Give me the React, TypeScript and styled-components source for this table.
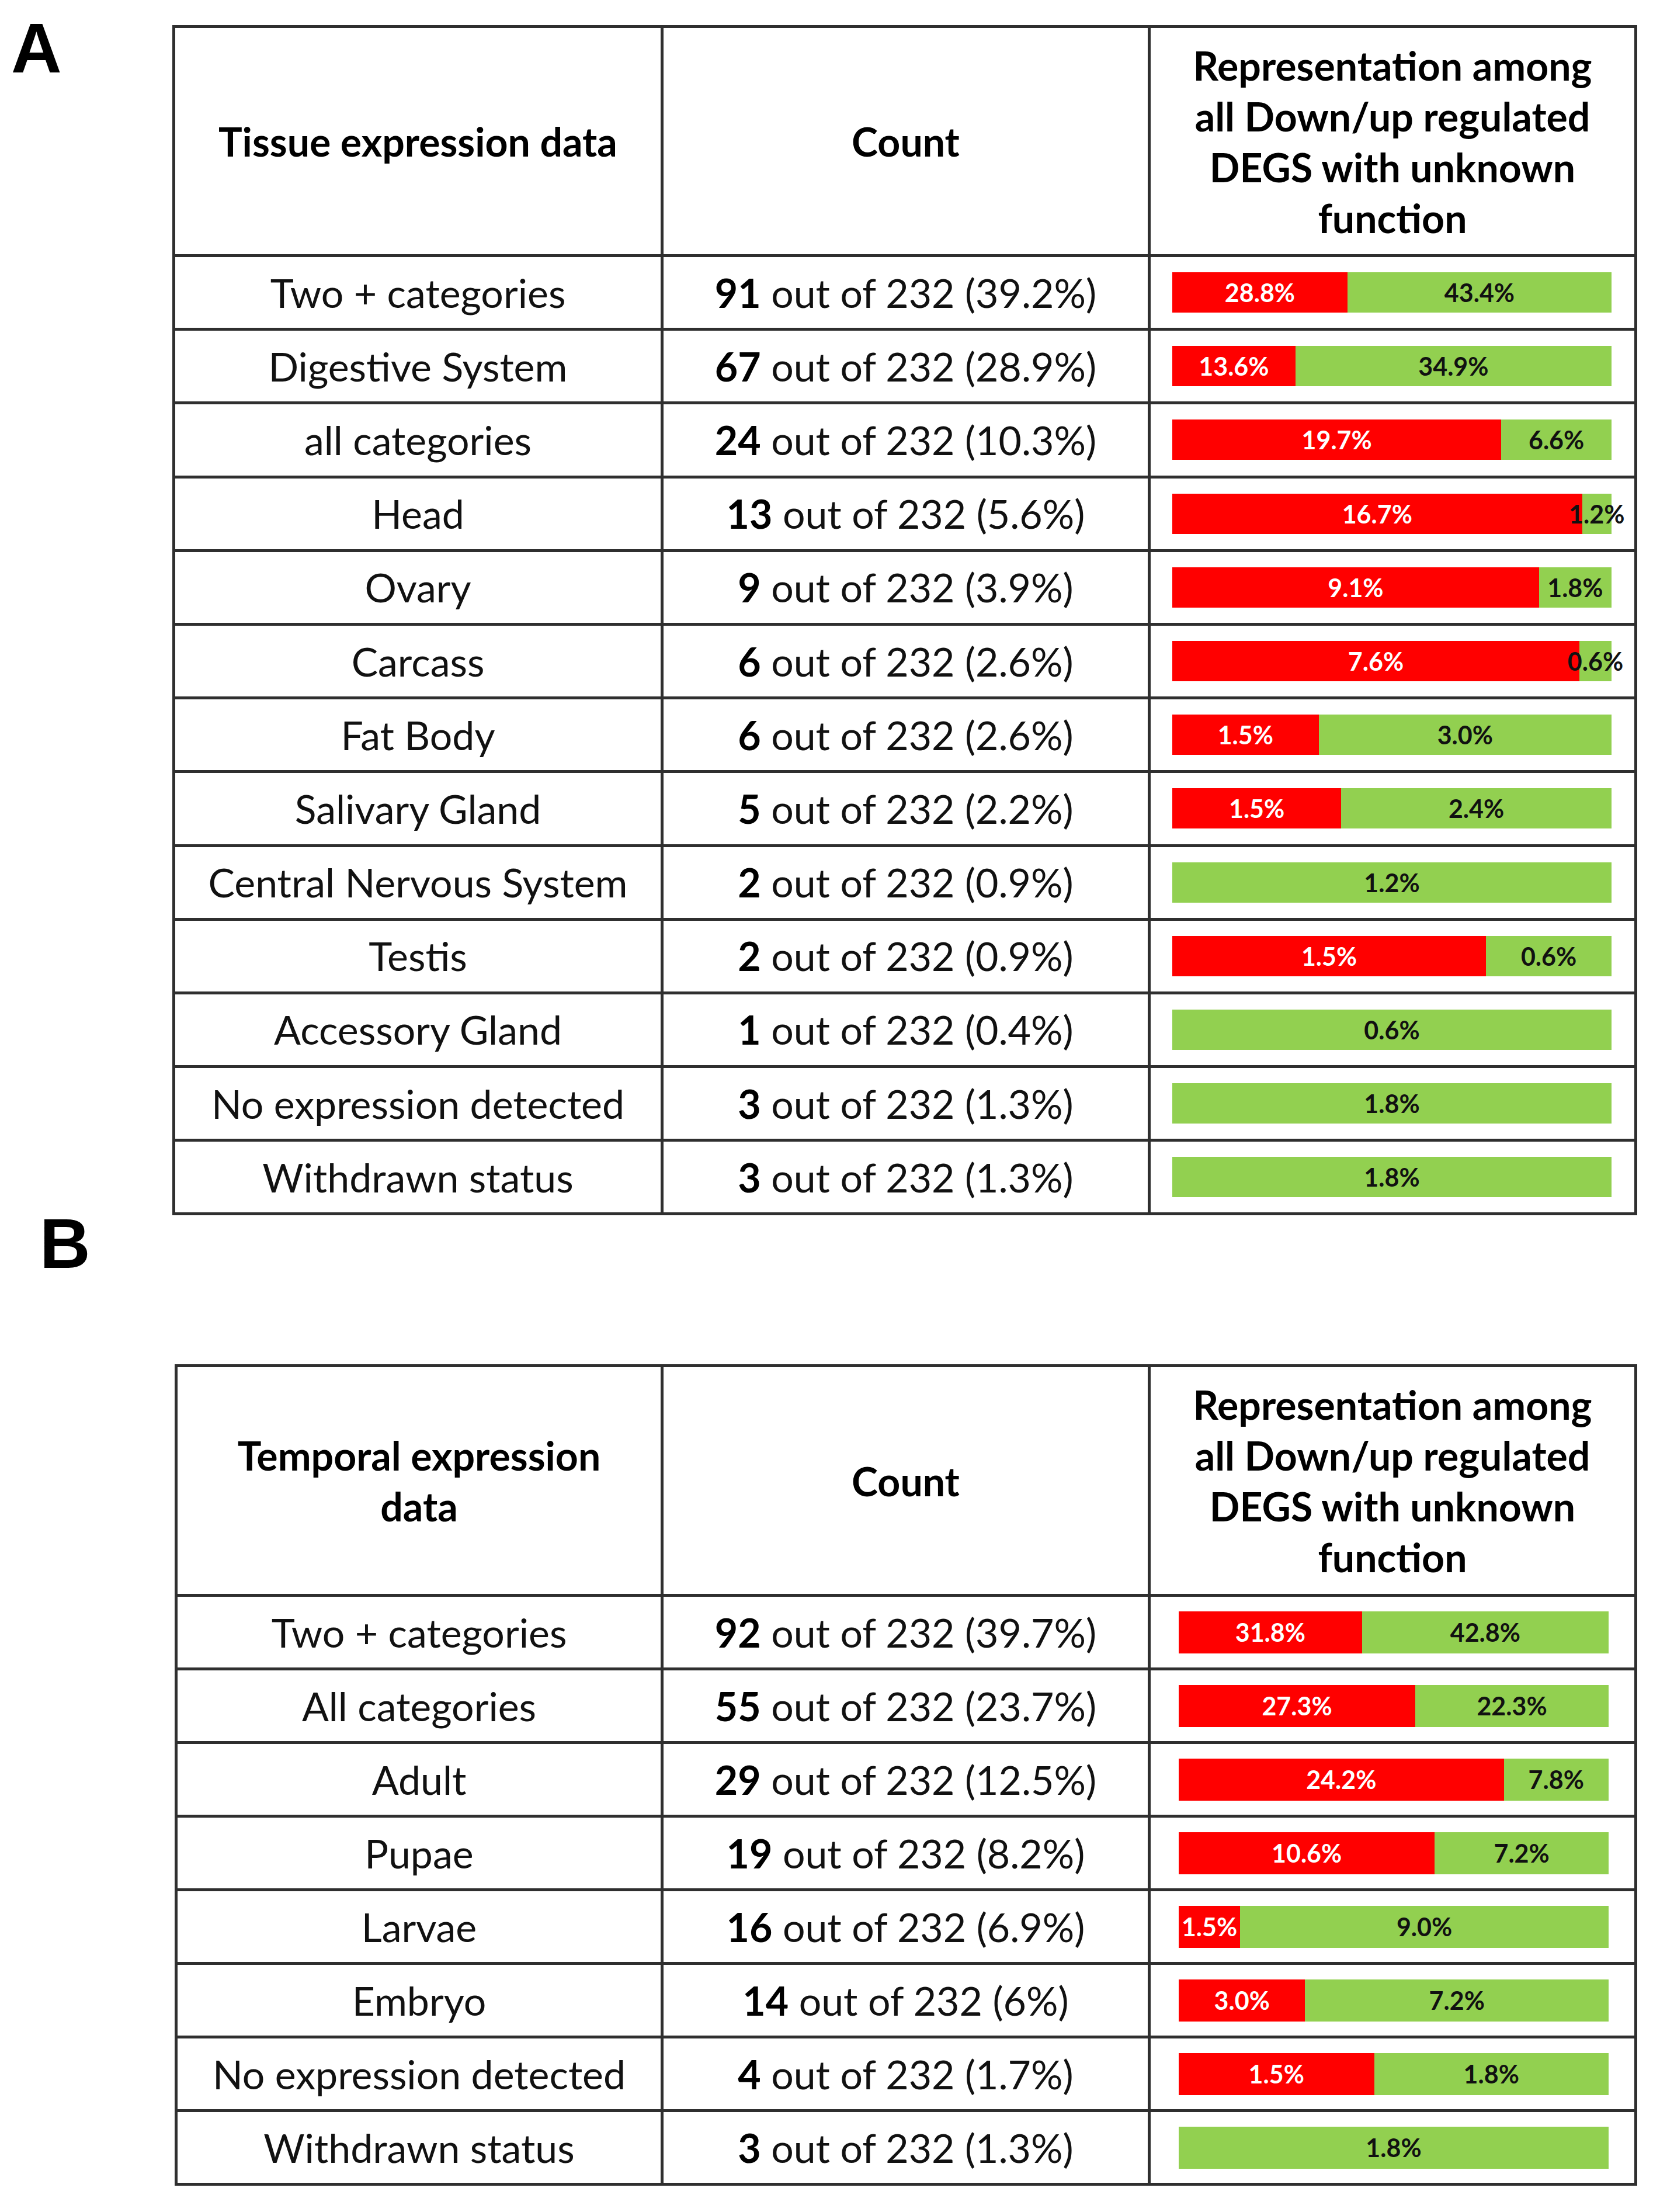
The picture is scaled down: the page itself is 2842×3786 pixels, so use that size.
import React from "react";
import styled, { createGlobalStyle } from "styled-components";

const GlobalStyle = createGlobalStyle`
  html, body {
    margin: 0;
    padding: 0;
    background: #ffffff;
  }
  body {
    width: 2842px;
    min-height: 3786px;
    font-family: Lato, "Open Sans", "Noto Sans", sans-serif;
    color: #000000;
  }
`;

type Split = { down?: number; up: number };
type DataRow = { label: string; n: number; pct: string; split: Split };

const tissueRows: DataRow[] = [
  { label: "Two + categories", n: 91, pct: "39.2%", split: { down: 28.8, up: 43.4 } },
  { label: "Digestive System", n: 67, pct: "28.9%", split: { down: 13.6, up: 34.9 } },
  { label: "all categories", n: 24, pct: "10.3%", split: { down: 19.7, up: 6.6 } },
  { label: "Head", n: 13, pct: "5.6%", split: { down: 16.7, up: 1.2 } },
  { label: "Ovary", n: 9, pct: "3.9%", split: { down: 9.1, up: 1.8 } },
  { label: "Carcass", n: 6, pct: "2.6%", split: { down: 7.6, up: 0.6 } },
  { label: "Fat Body", n: 6, pct: "2.6%", split: { down: 1.5, up: 3.0 } },
  { label: "Salivary Gland", n: 5, pct: "2.2%", split: { down: 1.5, up: 2.4 } },
  { label: "Central Nervous System", n: 2, pct: "0.9%", split: { up: 1.2 } },
  { label: "Testis", n: 2, pct: "0.9%", split: { down: 1.5, up: 0.6 } },
  { label: "Accessory Gland", n: 1, pct: "0.4%", split: { up: 0.6 } },
  { label: "No expression detected", n: 3, pct: "1.3%", split: { up: 1.8 } },
  { label: "Withdrawn status", n: 3, pct: "1.3%", split: { up: 1.8 } },
];

const temporalRows: DataRow[] = [
  { label: "Two + categories", n: 92, pct: "39.7%", split: { down: 31.8, up: 42.8 } },
  { label: "All categories", n: 55, pct: "23.7%", split: { down: 27.3, up: 22.3 } },
  { label: "Adult", n: 29, pct: "12.5%", split: { down: 24.2, up: 7.8 } },
  { label: "Pupae", n: 19, pct: "8.2%", split: { down: 10.6, up: 7.2 } },
  { label: "Larvae", n: 16, pct: "6.9%", split: { down: 1.5, up: 9.0 } },
  { label: "Embryo", n: 14, pct: "6%", split: { down: 3.0, up: 7.2 } },
  { label: "No expression detected", n: 4, pct: "1.7%", split: { down: 1.5, up: 1.8 } },
  { label: "Withdrawn status", n: 3, pct: "1.3%", split: { up: 1.8 } },
];

const Figure = styled.div`
  display: flex;
  flex-direction: column;
  width: 2842px;
  min-height: 3786px;
`;

const PanelRow = styled.div`
  display: flex;
  align-items: flex-start;
`;

const PanelLetter = styled.div<{ $padLeft: number; $width?: number; $top: number }>`
  font-family: "Liberation Sans", Arial, sans-serif;
  font-weight: 700;
  font-size: 120px;
  line-height: 96px;
  height: 96px;
  box-sizing: border-box;
  width: ${(p) => (p.$width ? `${p.$width}px` : "auto")};
  padding-left: ${(p) => p.$padLeft}px;
  margin-top: ${(p) => p.$top}px;
  color: #000;
`;

const TableGrid = styled.div<{
  $col1: number;
  $headerH: number;
  $rowH: number;
  $top: number;
  $left: number;
}>`
  display: grid;
  grid-template-columns: ${(p) => p.$col1}px 829px 828px;
  grid-template-rows: ${(p) => p.$headerH}px;
  grid-auto-rows: ${(p) => p.$rowH}px;
  gap: 5px;
  padding: 5px;
  background: #2f2f2f;
  width: fit-content;
  margin-top: ${(p) => p.$top}px;
  margin-left: ${(p) => p.$left}px;
`;

const HeaderCell = styled.div`
  background: #ffffff;
  display: flex;
  align-items: center;
  justify-content: center;
  text-align: center;
  font-weight: 700;
  font-size: 68px;
  line-height: 87px;
  color: #000;
  padding: 0 20px;
`;

const Cell = styled.div`
  background: #ffffff;
  display: flex;
  align-items: center;
  justify-content: center;
  text-align: center;
  font-weight: 400;
  font-size: 68px;
  line-height: 1;
  color: #111;
  white-space: nowrap;
`;

const Num = styled.b`
  font-weight: 700;
  color: #000;
`;

const BarCell = styled.div<{ $padL: number; $padR: number }>`
  background: #ffffff;
  display: flex;
  align-items: center;
  padding: 0 ${(p) => p.$padR}px 0 ${(p) => p.$padL}px;
`;

const Bar = styled.div<{ $h: number }>`
  display: flex;
  width: 100%;
  height: ${(p) => p.$h}px;
`;

const Segment = styled.div<{ $kind: "down" | "up" }>`
  flex-shrink: 0;
  min-width: 0;
  display: flex;
  align-items: center;
  justify-content: center;
  background: ${(p) => (p.$kind === "down" ? "#ff0000" : "#92d050")};
  color: ${(p) => (p.$kind === "down" ? "#ffffff" : "#111111")};
  font-weight: 700;
  font-size: 43px;
  line-height: 1;
  white-space: nowrap;
  overflow: visible;
`;

const fmt = (v: number) => `${v.toFixed(1)}%`;

type TableProps = {
  title: React.ReactNode;
  rows: DataRow[];
  col1: number;
  headerH: number;
  rowH: number;
  top: number;
  left: number;
  barH: number;
  padL: number;
  padR: number;
};

const SplitBar = ({ split, h }: { split: Split; h: number }) => {
  const down = split.down ?? 0;
  const total = down + split.up;
  return (
    <Bar $h={h}>
      {split.down !== undefined && (
        <Segment $kind="down" style={{ width: `${(down / total) * 100}%` }}>
          {fmt(down)}
        </Segment>
      )}
      <Segment $kind="up" style={{ width: `${(split.up / total) * 100}%` }}>
        {fmt(split.up)}
      </Segment>
    </Bar>
  );
};

const ExpressionTable = ({ title, rows, col1, headerH, rowH, top, left, barH, padL, padR }: TableProps) => (
  <TableGrid $col1={col1} $headerH={headerH} $rowH={rowH} $top={top} $left={left}>
    <HeaderCell>{title}</HeaderCell>
    <HeaderCell>Count</HeaderCell>
    <HeaderCell>
      Representation among
      <br />
      all Down/up regulated
      <br />
      DEGS with unknown
      <br />
      function
    </HeaderCell>
    {rows.map((r, i) => (
      <React.Fragment key={i}>
        <Cell>{r.label}</Cell>
        <Cell>
          <Num>{r.n}</Num>&nbsp;out of 232 ({r.pct})
        </Cell>
        <BarCell $padL={padL} $padR={padR}>
          <SplitBar split={r.split} h={barH} />
        </BarCell>
      </React.Fragment>
    ))}
  </TableGrid>
);

export default function App() {
  return (
    <>
      <GlobalStyle />
      <Figure>
        <PanelRow>
          <PanelLetter $padLeft={19} $width={295} $top={34}>
            A
          </PanelLetter>
          <ExpressionTable
            title="Tissue expression data"
            rows={tissueRows}
            col1={831}
            headerH={387}
            rowH={121.2}
            top={43}
            left={0}
            barH={69}
            padL={37}
            padR={39}
          />
        </PanelRow>
        <PanelLetter $padLeft={68} $top={0}>
          B
        </PanelLetter>
        <ExpressionTable
          title={
            <>
              Temporal expression
              <br />
              data
            </>
          }
          rows={temporalRows}
          col1={827}
          headerH={388}
          rowH={121}
          top={159}
          left={299}
          barH={72}
          padL={48}
          padR={44}
        />
      </Figure>
    </>
  );
}
